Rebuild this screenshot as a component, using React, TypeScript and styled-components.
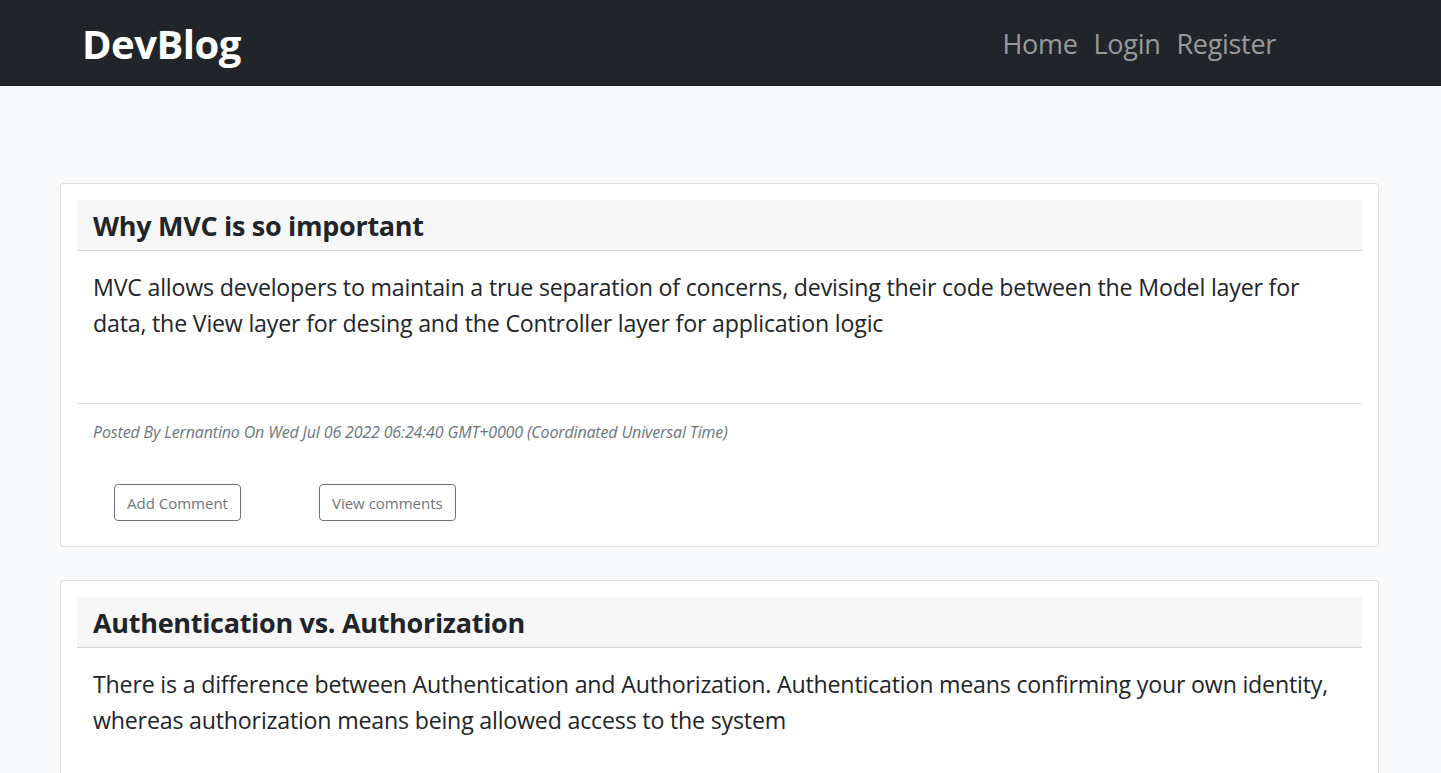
import styled, { createGlobalStyle } from 'styled-components'

interface Post {
  id: number,
  title: string,
  body: string,
  author: string,
  date: string
}

const posts: Post[] = [
  {
    id: 1,
    title: 'Why MVC is so important',
    body: 'MVC allows developers to maintain a true separation of concerns, devising their code between the Model layer for data, the View layer for desing and the Controller layer for application logic',
    author: 'Lernantino',
    date: 'Wed Jul 06 2022 06:24:40 GMT+0000 (Coordinated Universal Time)'
  },
  {
    id: 2,
    title: 'Authentication vs. Authorization',
    body: 'There is a difference between Authentication and Authorization. Authentication means confirming your own identity, whereas authorization means being allowed access to the system',
    author: 'Lernantino',
    date: 'Wed Jul 06 2022 06:24:40 GMT+0000 (Coordinated Universal Time)'
  }
]

export default function App() {
  return (
    <>
      <GlobalStyle />
      <Navbar>
        <Brand>DevBlog</Brand>
        <NavLinks>
          <NavLink href="#">Home</NavLink>
          <NavLink href="#">Login</NavLink>
          <NavLink href="#">Register</NavLink>
        </NavLinks>
      </Navbar>
      <Main>
        {posts.map(post => (
          <Card key={post.id}>
            <CardHeader>
              <Title>{post.title}</Title>
            </CardHeader>
            <CardBody>{post.body}</CardBody>
            <CardFooter>
              <Meta>Posted By {post.author} On {post.date}</Meta>
              <Buttons>
                <OutlineButton>Add Comment</OutlineButton>
                <OutlineButton>View comments</OutlineButton>
              </Buttons>
            </CardFooter>
          </Card>
        ))}
      </Main>
    </>
  )
}

const GlobalStyle = createGlobalStyle`
  body {
    margin: 0;
    background: #f8f9fa;
    color: #212529;
    font-family: "Open Sans", "Noto Sans", sans-serif;
  }
`

const Navbar = styled.nav`
  display: flex;
  align-items: center;
  justify-content: space-between;
  height: 86px;
  background: #212529;
  padding: 0 165px 0 82px;
`

const Brand = styled.div`
  color: #fff;
  font-size: 40px;
  font-weight: 700;
  letter-spacing: -0.5px;
`

const NavLinks = styled.div`
  display: flex;
  gap: 16px;
`

const NavLink = styled.a`
  color: rgba(255, 255, 255, 0.55);
  font-size: 27px;
  text-decoration: none;
  letter-spacing: -0.3px;
`

const Main = styled.main`
  display: flex;
  flex-direction: column;
  gap: 33px;
  padding: 97px 62px 0 60px;
`

const Card = styled.section`
  background: #fff;
  border: 1px solid rgba(0, 0, 0, 0.125);
  border-radius: 4px;
  padding: 16px 16px 25px;
`

const CardHeader = styled.header`
  background: #f7f7f7;
  border-bottom: 1px solid rgba(0, 0, 0, 0.125);
  padding: 0 16px;
  height: 50px;
  display: flex;
  align-items: center;
`

const Title = styled.h2`
  margin: 0;
  font-size: 27px;
  font-weight: 700;
  letter-spacing: -0.3px;
`

const CardBody = styled.p`
  margin: 0;
  padding: 18px 16px 0;
  height: 152px;
  box-sizing: border-box;
  font-size: 23.2px;
  line-height: 36px;
  letter-spacing: -0.2px;
`

const CardFooter = styled.footer`
  border-top: 1px solid rgba(0, 0, 0, 0.125);
  padding: 18px 16px 0;
`

const Meta = styled.div`
  font-size: 16px;
  font-style: italic;
  color: #6c757d;
  line-height: 21px;
  letter-spacing: -0.15px;
`

const Buttons = styled.div`
  display: flex;
  gap: 78px;
  margin: 41px 0 0 21px;
`

const OutlineButton = styled.button`
  font-family: inherit;
  font-size: 15px;
  color: #6c757d;
  background: transparent;
  border: 1px solid #6c757d;
  border-radius: 4px;
  height: 37px;
  padding: 0 12px;
  cursor: pointer;
`
